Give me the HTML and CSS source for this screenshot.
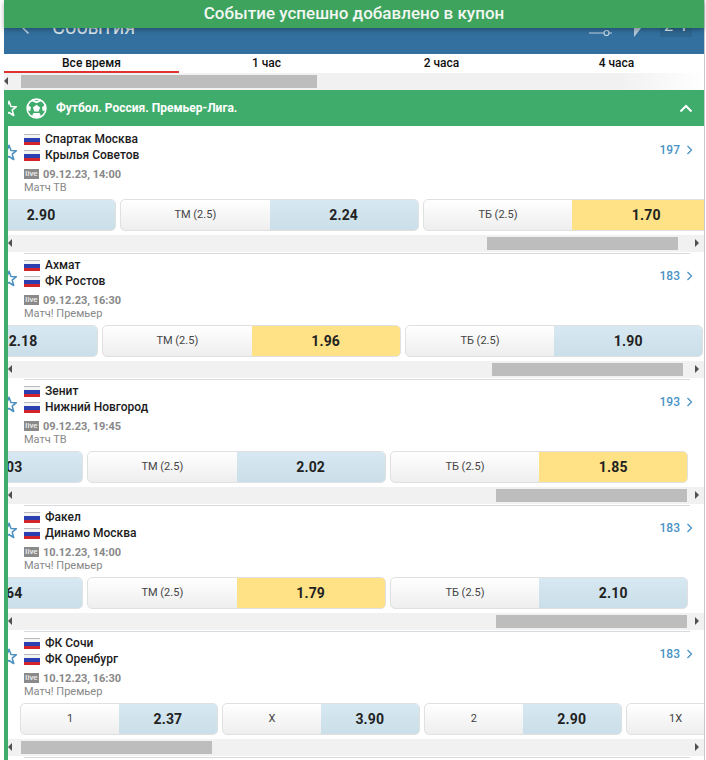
FILE: index.html
```html
<!DOCTYPE html>
<html lang="ru">
<head>
<meta charset="utf-8">
<title>События</title>
<link rel="stylesheet" href="styles.css">
</head>
<body>
<svg class="defs" width="0" height="0" aria-hidden="true">
  <symbol id="star" viewBox="0 0 16 17"><path d="M8 1.2l2 5.2 5.4.3-4.2 3.4 1.5 5.4L8 12.5l-4.7 3 1.5-5.4L.6 6.7 6 6.4z" fill="none" stroke="currentColor" stroke-width="1.5" stroke-linejoin="round"/></symbol>
  <symbol id="chev" viewBox="0 0 7 10"><path d="M1.5 1l4 4-4 4" fill="none" stroke="currentColor" stroke-width="1.3"/></symbol>
</svg>
<div class="toast">Событие успешно добавлено в купон</div>
<main class="page">
  <header class="topbar">
    <svg class="back" width="10" height="16" viewBox="0 0 10 16"><path d="M8.5 1.5L2 8l6.5 6.5" fill="none" stroke="currentColor" stroke-width="1.6"/></svg>
    <span class="title">События</span>
    <svg class="filter" width="24" height="16" viewBox="0 0 24 16"><path d="M1 11h15M21 11h3M10 5V1" stroke="currentColor" stroke-width="1" fill="none"/><circle cx="18.5" cy="11" r="2.5" fill="none" stroke="currentColor" stroke-width="1.2"/></svg>
    <svg class="wedge" width="8" height="10" viewBox="0 0 8 10"><path d="M0 10V0h8z" fill="#b9cbd9"/></svg>
    <span class="hours">2Ч</span>
  </header>
  <nav class="tabs">
    <a class="tab tab-on">Все время</a>
    <a class="tab">1 час</a>
    <a class="tab">2 часа</a>
    <a class="tab">4 часа</a>
  </nav>
  <div class="sbar sbar-top">
    <i class="arr arr-l"></i>
    <div class="sbar-run"><b class="thumb" style="width:296px"></b></div>
  </div>
  <section class="league">
    <span class="star-slot"><svg class="star" width="16" height="17"><use href="#star"/></svg></span>
    <svg class="ball" width="21" height="21" viewBox="0 0 21 21"><circle cx="10.5" cy="10.5" r="9.4" fill="none" stroke="#fff" stroke-width="1.6"/><path d="M10.5 6.8l3.6 2.6-1.4 4.2H8.300l-1.400-4.200zM7 1.600l3.500 1.700 3.500-1.700 1 1.700-4.500 2-4.500-2zM2 7l3 2.300-.8 4L1.500 12zM19 7l-3 2.300.8 4 2.700-1.300zM6 18l1.500-3h6L15 18l-4.500 1.700z" fill="#fff"/></svg>
    <span class="league-name">Футбол. Россия. Премьер-Лига.</span>
    <svg class="collapse" width="14" height="9" viewBox="0 0 14 9"><path d="M1.500 7.500L7 2l5.500 5.500" fill="none" stroke="#fff" stroke-width="2"/></svg>
  </section>
  <div class="matches">

    <article class="match">
      <div class="head">
        <span class="star-slot star-blue"><svg class="star" width="16" height="17"><use href="#star"/></svg></span>
        <div class="info">
          <div class="team"><i class="flag"></i>Спартак Москва</div>
          <div class="team"><i class="flag"></i>Крылья Советов</div>
          <div class="when"><i class="live">live</i>09.12.23, 14:00</div>
          <div class="tv">Матч ТВ</div>
        </div>
        <a class="more">197<svg class="chev" width="7" height="10"><use href="#chev"/></svg></a>
      </div>
      <div class="strip">
        <div class="odds odds-a">
          <div class="pill"><span class="lab"></span><span class="val">2.90</span></div>
          <div class="pill"><span class="lab">ТМ (2.5)</span><span class="val">2.24</span></div>
          <div class="pill"><span class="lab">ТБ (2.5)</span><span class="val val-hot">1.70</span></div>
        </div>
      </div>
      <div class="sbar">
        <i class="arr arr-l"></i>
        <div class="sbar-run"><b class="thumb" style="width:191px;margin-left:466px"></b></div>
        <i class="arr arr-r"></i>
      </div>
    </article>

    <article class="match">
      <div class="head">
        <span class="star-slot star-blue"><svg class="star" width="16" height="17"><use href="#star"/></svg></span>
        <div class="info">
          <div class="team"><i class="flag"></i>Ахмат</div>
          <div class="team"><i class="flag"></i>ФК Ростов</div>
          <div class="when"><i class="live">live</i>09.12.23, 16:30</div>
          <div class="tv">Матч! Премьер</div>
        </div>
        <a class="more">183<svg class="chev" width="7" height="10"><use href="#chev"/></svg></a>
      </div>
      <div class="strip">
        <div class="odds odds-b">
          <div class="pill"><span class="lab"></span><span class="val">2.18</span></div>
          <div class="pill"><span class="lab">ТМ (2.5)</span><span class="val val-hot">1.96</span></div>
          <div class="pill"><span class="lab">ТБ (2.5)</span><span class="val">1.90</span></div>
        </div>
      </div>
      <div class="sbar">
        <i class="arr arr-l"></i>
        <div class="sbar-run"><b class="thumb" style="width:191px;margin-left:471px"></b></div>
        <i class="arr arr-r"></i>
      </div>
    </article>

    <article class="match">
      <div class="head">
        <span class="star-slot star-blue"><svg class="star" width="16" height="17"><use href="#star"/></svg></span>
        <div class="info">
          <div class="team"><i class="flag"></i>Зенит</div>
          <div class="team"><i class="flag"></i>Нижний Новгород</div>
          <div class="when"><i class="live">live</i>09.12.23, 19:45</div>
          <div class="tv">Матч ТВ</div>
        </div>
        <a class="more">193<svg class="chev" width="7" height="10"><use href="#chev"/></svg></a>
      </div>
      <div class="strip">
        <div class="odds odds-c">
          <div class="pill"><span class="lab"></span><span class="val">1.03</span></div>
          <div class="pill"><span class="lab">ТМ (2.5)</span><span class="val">2.02</span></div>
          <div class="pill"><span class="lab">ТБ (2.5)</span><span class="val val-hot">1.85</span></div>
        </div>
      </div>
      <div class="sbar">
        <i class="arr arr-l"></i>
        <div class="sbar-run"><b class="thumb" style="width:191px;margin-left:475px"></b></div>
        <i class="arr arr-r"></i>
      </div>
    </article>

    <article class="match">
      <div class="head">
        <span class="star-slot star-blue"><svg class="star" width="16" height="17"><use href="#star"/></svg></span>
        <div class="info">
          <div class="team"><i class="flag"></i>Факел</div>
          <div class="team"><i class="flag"></i>Динамо Москва</div>
          <div class="when"><i class="live">live</i>10.12.23, 14:00</div>
          <div class="tv">Матч! Премьер</div>
        </div>
        <a class="more">183<svg class="chev" width="7" height="10"><use href="#chev"/></svg></a>
      </div>
      <div class="strip">
        <div class="odds odds-c">
          <div class="pill"><span class="lab"></span><span class="val">1.64</span></div>
          <div class="pill"><span class="lab">ТМ (2.5)</span><span class="val val-hot">1.79</span></div>
          <div class="pill"><span class="lab">ТБ (2.5)</span><span class="val">2.10</span></div>
        </div>
      </div>
      <div class="sbar">
        <i class="arr arr-l"></i>
        <div class="sbar-run"><b class="thumb" style="width:191px;margin-left:475px"></b></div>
        <i class="arr arr-r"></i>
      </div>
    </article>

    <article class="match">
      <div class="head">
        <span class="star-slot star-blue"><svg class="star" width="16" height="17"><use href="#star"/></svg></span>
        <div class="info">
          <div class="team"><i class="flag"></i>ФК Сочи</div>
          <div class="team"><i class="flag"></i>ФК Оренбург</div>
          <div class="when"><i class="live">live</i>10.12.23, 16:30</div>
          <div class="tv">Матч! Премьер</div>
        </div>
        <a class="more">183<svg class="chev" width="7" height="10"><use href="#chev"/></svg></a>
      </div>
      <div class="strip">
        <div class="odds odds-d">
          <div class="pill pill-s"><span class="lab">1</span><span class="val">2.37</span></div>
          <div class="pill pill-s"><span class="lab">X</span><span class="val">3.90</span></div>
          <div class="pill pill-s"><span class="lab">2</span><span class="val">2.90</span></div>
          <div class="pill pill-s"><span class="lab">1X</span><span class="val"></span></div>
        </div>
      </div>
      <div class="sbar">
        <i class="arr arr-l"></i>
        <div class="sbar-run"><b class="thumb" style="width:191px"></b></div>
        <i class="arr arr-r"></i>
      </div>
    </article>

  </div>
</main>
</body>
</html>
```

FILE: styles.css
```css
* { box-sizing: border-box; }
html, body { margin: 0; height: 760px; overflow: hidden; background: #fff; }
body { padding-left: 4px; font-family: Roboto, "Liberation Sans", sans-serif; color: #111; position: relative; }
.defs { position: absolute; }

.toast {
  position: absolute; left: 4px; top: 0; width: 700px; height: 28px;
  background: #3ea35c; color: #f2f7f3;
  font-size: 17px; font-weight: 500; line-height: 27px; text-align: center;
  box-shadow: 0 2px 5px rgba(0,0,0,.3);
  z-index: 5;
}

.page { width: 701px; height: 760px; border-right: 1px solid #c9c9c9; }

.topbar {
  height: 54px; background: #33709f; color: #c4d5e2;
  display: flex; align-items: center; padding-left: 16px;
}
.back { margin-right: 22px; }
.title { font-size: 20px; line-height: 24px; width: 536px; color: #dfe9f0; }
.filter { margin-top: 6px; }
.wedge { margin: 9px 0 0 22px; }
.hours {
  width: 32px; height: 32px; margin: 5px 0 0 18px;
  background: #2f6791; color: #e4edf3; font-size: 16px; letter-spacing: 2px; line-height: 41px; text-align: center;
  align-self: flex-start;
}

.tabs { display: flex; height: 19px; }
.tab {
  width: 175px; height: 19px; text-align: center;
  font-size: 12px; font-weight: 500; line-height: 18px; color: #111;
}
.tab-on { border-bottom: 1px solid #d33; box-shadow: inset 0 -1px 0 #d33; }

.sbar { display: flex; height: 17px; background: #f1f1f1; align-items: center; }
.sbar-top { position: relative; }
.sbar-top .sbar-run { padding-left: 4px; }
.sbar-top::after {
  content: ""; position: absolute; right: 0; top: 0; bottom: 0; width: 85px;
  background: linear-gradient(90deg, rgba(255,255,255,0), #fff);
}
.sbar-run { flex: 1; display: flex; height: 13px; }
.thumb { display: block; height: 13px; background: #bdbdbd; }
.arr { display: block; width: 13px; height: 17px; position: relative; flex: none; }
.arr::before { content: ""; position: absolute; top: 4px; border: 4px solid transparent; }
.arr-l::before { left: 0; border-left-width: 0; border-right: 4px solid #505050; }
.arr-r::before { left: 4px; border-right-width: 0; border-left: 4px solid #505050; }

.league {
  height: 36px; background: #3fac6c; color: #fff;
  display: flex; align-items: center; padding-left: 4px; margin-bottom: 2px;
}
.star-slot { display: block; width: 16px; height: 17px; overflow: hidden; flex: none; }
.star { display: block; margin-left: -7px; }
.ball { margin: 0 0 0 2px; flex: none; }
.league-name { font-size: 12px; font-weight: 700; margin-left: 9px; flex: 1; }
.collapse { margin-right: 11px; }

.matches { border-left: 4px solid #3fac6c; height: 634px; margin-top: -2px; padding-top: 2px; }
.match { height: 126px; background: #fff; }
.match::after { content: ""; display: block; height: 1px; margin: 1px 14px 0 16px; background: #d4dadd; }

.head { height: 71px; display: flex; }
.star-blue { color: #4a8fbe; margin-top: 16px; }
.info { flex: 1; padding-top: 3px; }
.team { display: flex; align-items: center; height: 16px; font-size: 12px; font-weight: 500; color: #1b1b1b; }
.flag {
  display: block; width: 16px; height: 11px; margin-right: 5px; flex: none;
  border-top: 1px solid #bbb;
  background: linear-gradient(#f4f4f4 33%, #2a3fb0 33%, #2a3fb0 66%, #d3242c 66%);
}
.when { display: flex; align-items: center; height: 14px; margin-top: 4px; font-size: 11px; font-weight: 700; color: #888; }
.live {
  display: block; width: 15px; height: 10px; margin-right: 4px;
  background: #8a8a8a; color: #eee; font-size: 8px; font-weight: 500; font-style: normal; line-height: 10px; text-align: center;
}
.tv { height: 14px; font-size: 11px; line-height: 14px; color: #888; }
.more { display: flex; align-items: center; height: 16px; margin: 14px 11px 0 0; font-size: 12px; font-weight: 500; color: #4a92c4; }
.chev { margin-left: 6px; color: #4a92c4; }

.strip { overflow: hidden; height: 32px; margin-bottom: 4px; }
.odds { display: flex; gap: 4px; }
.odds-a { margin-left: -190.6px; }
.odds-b { margin-left: -208.6px; }
.odds-c { margin-left: -223.6px; }
.odds-d { margin-left: 12px; }
.pill {
  flex: none; display: flex; width: 298.6px; height: 32px; border: 1px solid #e0e0e0; border-radius: 5px; overflow: hidden;
  background: linear-gradient(#fff, #eee);
}
.pill-s { width: 197.9px; }
.lab { flex: 0 0 148.7px; font-size: 11px; line-height: 30px; text-align: center; color: #444; }
.pill-s .lab { flex: 0 0 97.95px; }
.val {
  flex: 1; font-size: 14px; font-weight: 700; line-height: 30px; text-align: center; color: #222; letter-spacing: .15px;
  background: linear-gradient(#d7e8f2, #cadfe9);
}
.val-hot { background: #fee285; }
```
